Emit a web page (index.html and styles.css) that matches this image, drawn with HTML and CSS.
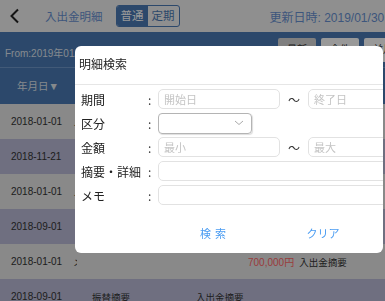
FILE: index.html
```html
<!DOCTYPE html>
<html lang="ja">
<head>
    <meta charset="UTF-8">
    <title>入出金明細</title>
    <link rel="stylesheet" href="styles.css">
</head>
<body>
    <header class="topbar">
        <svg class="back" width="12" height="16" viewBox="0 0 12 16">
            <polyline points="9,1.5 2.5,8 9,14.5" fill="none" stroke="#222" stroke-width="2"/>
        </svg>
        <span class="page-title">入出金明細</span>
        <div class="segment">
            <span class="seg-btn active">普通</span>
            <span class="seg-btn">定期</span>
        </div>
        <span class="updated">更新日時: 2019/01/30 10:00</span>
    </header>

    <section class="filter">
        <div class="filter-top">
            <span class="range">From:2019年01/01 To:2019年01/30</span>
            <div class="filter-btns">
                <span class="fbtn gray">最新</span>
                <span class="fbtn">全件</span>
                <span class="fbtn">前月</span>
            </div>
        </div>
        <div class="colhead">年月日▼</div>
    </section>

    <div class="list">
        <div class="row"><span class="date">2018-01-01</span><span class="memo">メモ</span></div>
        <div class="row alt"><span class="date">2018-11-21</span></div>
        <div class="row"><span class="date">2018-01-01</span><span class="memo">メモ</span></div>
        <div class="row alt"><span class="date">2018-09-01</span></div>
        <div class="row">
            <span class="date">2018-01-01</span><span class="memo">メモ</span>
            <span class="amount">700,000円</span><span class="desc">入出金摘要</span>
        </div>
        <div class="row alt">
            <span class="date">2018-09-01</span><span class="transfer">振替摘要</span>
            <span class="desc2">入出金摘要</span>
        </div>
    </div>

    <div class="overlay"></div>

    <div class="modal">
        <div class="modal-title">明細検索</div>
        <div class="form">
            <span class="label">期間</span><span class="colon">:</span>
            <div class="field">
                <span class="input">開始日</span><span class="tilde">〜</span><span class="input">終了日</span>
            </div>

            <span class="label">区分</span><span class="colon">:</span>
            <div class="field">
                <span class="select">
                    <svg width="10" height="6" viewBox="0 0 10 6"><polyline points="1,1 5,4.5 9,1" fill="none" stroke="#aaa" stroke-width="1"/></svg>
                </span>
            </div>

            <span class="label">金額</span><span class="colon">:</span>
            <div class="field">
                <span class="input">最小</span><span class="tilde">〜</span><span class="input">最大</span>
            </div>

            <span class="label">摘要・詳細</span><span class="colon">:</span>
            <div class="field"><span class="input wide"></span></div>

            <span class="label">メモ</span><span class="colon">:</span>
            <div class="field"><span class="input wide"></span></div>
        </div>
        <div class="modal-btns">
            <span class="mbtn search">検索</span>
            <span class="mbtn">クリア</span>
        </div>
    </div>
</body>
</html>
```

FILE: styles.css
```css
body {
    font-family: "Liberation Sans", "Noto Sans CJK JP", sans-serif;
    margin: 0;
    width: 385px;
    height: 301px;
    overflow: hidden;
    background: #e4e4e4;
    color: #333;
}

.topbar {
    height: 32px;
    background: #efefef;
    display: flex;
    align-items: center;
    white-space: nowrap;
}

.topbar > * {
    flex-shrink: 0;
}

.back {
    margin-left: 9px;
}

.page-title {
    margin-left: 24px;
    font-size: 11.5px;
    color: #6790d0;
}

.segment {
    margin-left: 13px;
    display: flex;
    height: 22px;
    border: 1px solid #4a78b2;
    border-radius: 3px;
    box-sizing: border-box;
    overflow: hidden;
}

.seg-btn {
    width: 31px;
    font-size: 11.5px;
    line-height: 20px;
    text-align: center;
    color: #4a78b2;
}

.seg-btn.active {
    background: #4a78b2;
    color: #fff;
}

.updated {
    margin-left: 90px;
    font-size: 12px;
    color: #6790d0;
}

.filter {
    background: #4a78b2;
    height: 72px;
}

.filter-top {
    height: 35px;
    border-bottom: 1px solid #6f97c8;
    display: flex;
    white-space: nowrap;
    overflow: hidden;
}

.range {
    font-size: 10px;
    color: #dde4ee;
    margin: 13px 0 0 5px;
    width: 273px;
    flex-shrink: 0;
}

.filter-btns {
    display: flex;
    gap: 5px;
    padding-top: 6px;
}

.fbtn {
    width: 38px;
    height: 24px;
    background: #fff;
    border-radius: 2px;
    font-size: 10px;
    line-height: 24px;
    text-align: center;
    color: #333;
    flex-shrink: 0;
}

.fbtn.gray {
    background: #d4d4d4;
}

.colhead {
    width: 76px;
    text-align: center;
    font-size: 10.5px;
    line-height: 36px;
    color: #dfe4ea;
}

.list {
    display: flex;
    flex-direction: column;
}

.row {
    height: 35px;
    flex-shrink: 0;
    display: flex;
    align-items: center;
    font-size: 10px;
    white-space: nowrap;
    background: #e4e4e4;
}

.row.alt {
    background: #b9bad6;
}

.date {
    width: 62px;
    padding-left: 11px;
    flex-shrink: 0;
}

.memo {
    width: 4px;
    overflow: hidden;
    margin-right: 171px;
    flex-shrink: 0;
}

.amount {
    color: #ff6464;
    margin-right: 5px;
}

.desc {
    font-size: 9.5px;
}

.transfer {
    margin-left: 19px;
    width: 104px;
    font-size: 9.5px;
}

.desc2 {
    font-size: 9.5px;
}

.overlay {
    position: fixed;
    inset: 0;
    background: rgba(0, 0, 0, 0.4);
}

.modal {
    position: absolute;
    left: 75px;
    top: 46px;
    width: 308px;
    height: 207px;
    background: #fff;
    border-radius: 6px;
    overflow: hidden;
    font-family: "Noto Sans CJK JP", sans-serif;
}

.modal-title {
    height: 38px;
    border-bottom: 1px solid #e6e6e6;
    font-size: 12px;
    line-height: 35px;
    padding-left: 4px;
    color: #222;
}

.form {
    display: grid;
    grid-template-columns: 63px 14px 1fr;
    grid-auto-rows: 24px;
    padding: 2px 0 0 6px;
    align-items: center;
}

.label {
    font-size: 12px;
    color: #222;
    white-space: nowrap;
}

.colon {
    font-size: 12px;
    color: #333;
    padding-left: 4px;
}

.field {
    display: flex;
    align-items: center;
    white-space: nowrap;
}

.input {
    width: 122px;
    height: 20px;
    box-sizing: border-box;
    border: 1px solid #e2e2e2;
    border-radius: 5px;
    padding-left: 5px;
    font-size: 11px;
    line-height: 18px;
    color: #c4c4c4;
    flex-shrink: 0;
}

.input.wide {
    width: 272px;
}

.tilde {
    width: 28px;
    text-align: center;
    font-size: 12px;
    color: #333;
    flex-shrink: 0;
}

.select {
    width: 94px;
    height: 21px;
    box-sizing: border-box;
    border: 1px solid #b4b4b4;
    border-radius: 4px;
    box-shadow: 1px 1px 1px #00000022;
    display: flex;
    align-items: center;
    justify-content: flex-end;
    padding-right: 7px;
}

.modal-btns {
    display: flex;
    padding: 18px 0 0 83px;
}

.mbtn {
    width: 110px;
    text-align: center;
    font-size: 11px;
    color: #4a9cf2;
}

.mbtn.search {
    letter-spacing: 4px;
    text-indent: 4px;
}
```
